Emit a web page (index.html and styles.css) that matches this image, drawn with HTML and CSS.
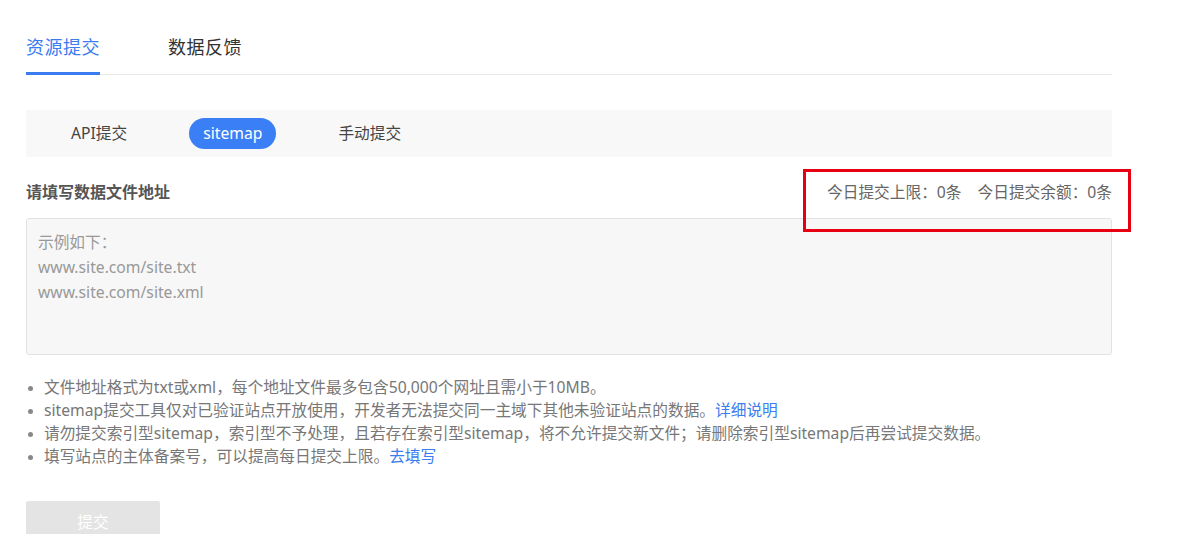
FILE: index.html
```html
<!DOCTYPE html>
<html lang="zh-CN">
<head>
<meta charset="utf-8">
<title>资源提交</title>
<link rel="stylesheet" href="styles.css">
</head>
<body>
<div class="page">
  <div class="tabs">
    <div class="tab active">资源提交</div>
    <div class="tab">数据反馈</div>
  </div>
  <div class="subtabs">
    <div class="subtab">API提交</div>
    <div class="subtab on">sitemap</div>
    <div class="subtab">手动提交</div>
  </div>
  <div class="labelrow">
    <div class="label">请填写数据文件地址</div>
    <div class="quota">今日提交上限：0条<span class="gap"></span>今日提交余额：0条</div>
    <div class="mark"></div>
  </div>
  <div class="textarea">
    <div>示例如下：</div>
    <div>www.site.com/site.txt</div>
    <div>www.site.com/site.xml</div>
  </div>
  <ul class="notes">
    <li>文件地址格式为txt或xml，每个地址文件最多包含50,000个网址且需小于10MB。</li>
    <li>sitemap提交工具仅对已验证站点开放使用，开发者无法提交同一主域下其他未验证站点的数据。<a class="link">详细说明</a></li>
    <li>请勿提交索引型sitemap，索引型不予处理，且若存在索引型sitemap，将不允许提交新文件；请删除索引型sitemap后再尝试提交数据。</li>
    <li>填写站点的主体备案号，可以提高每日提交上限。<a class="link">去填写</a></li>
  </ul>
  <div class="btn">提交</div>
</div>
</body>
</html>
```
FILE: styles.css
```css
* { box-sizing: border-box; }
html, body { margin: 0; padding: 0; background: #fff; }
body {
  font-family: "Noto Sans", "Noto Sans CJK SC", sans-serif;
  color: #333;
  overflow: hidden;
}
.page {
  width: 1086px;
  margin-left: 26px;
  padding-top: 32px;
}
.tabs {
  display: flex;
  gap: 68px;
  border-bottom: 1px solid #e8e8e8;
  height: 43px;
}
.tab {
  font-size: 18px;
  line-height: 30px;
  color: #333;
  height: 43px;
  letter-spacing: 0.5px;
}
.tab.active {
  color: #3b7cf0;
  border-bottom: 3px solid #3b7cf0;
}
.subtabs {
  margin-top: 35px;
  height: 47px;
  background: #f8f8f8;
  display: flex;
  align-items: center;
  padding-left: 45px;
}
.subtab {
  font-size: 15.7px;
  color: #444;
  height: 31px;
  line-height: 31px;
  border-radius: 16px;
  margin-right: 62px;
}
.subtab.on {
  background: #3b7ff6;
  color: #fff;
  padding: 0 14px;
  margin-right: 62px;
}
.labelrow {
  display: flex;
  justify-content: space-between;
  align-items: center;
  height: 60px;
  padding-top: 8px;
  position: relative;
}
.label {
  font-size: 16px;
  font-weight: 700;
  color: #555;
}
.quota {
  font-size: 15.7px;
  color: #666;
}
.gap { display: inline-block; width: 16px; }
.mark {
  position: absolute;
  right: -19px;
  top: 12px;
  width: 328px;
  height: 63px;
  border: 3px solid #e60012;
}
.textarea {
  margin-top: 1px;
  height: 137px;
  background: #f7f7f7;
  border: 1px solid #e2e2e2;
  border-radius: 3px;
  padding: 11px 11px;
  font-size: 15.7px;
  line-height: 25px;
  color: #999;
}
.notes {
  margin: 21px 0 0;
  padding: 0 0 0 18px;
  font-size: 15.7px;
  line-height: 23px;
  color: #777;
}
.notes li::marker { color: #888; font-size: 13px; }
.link { color: #3b7cf0; }
.btn {
  margin-top: 33px;
  width: 134px;
  height: 42px;
  background: #e4e4e4;
  border-radius: 2px;
  color: #fff;
  font-size: 15.7px;
  text-align: center;
  line-height: 42px;
}
```
